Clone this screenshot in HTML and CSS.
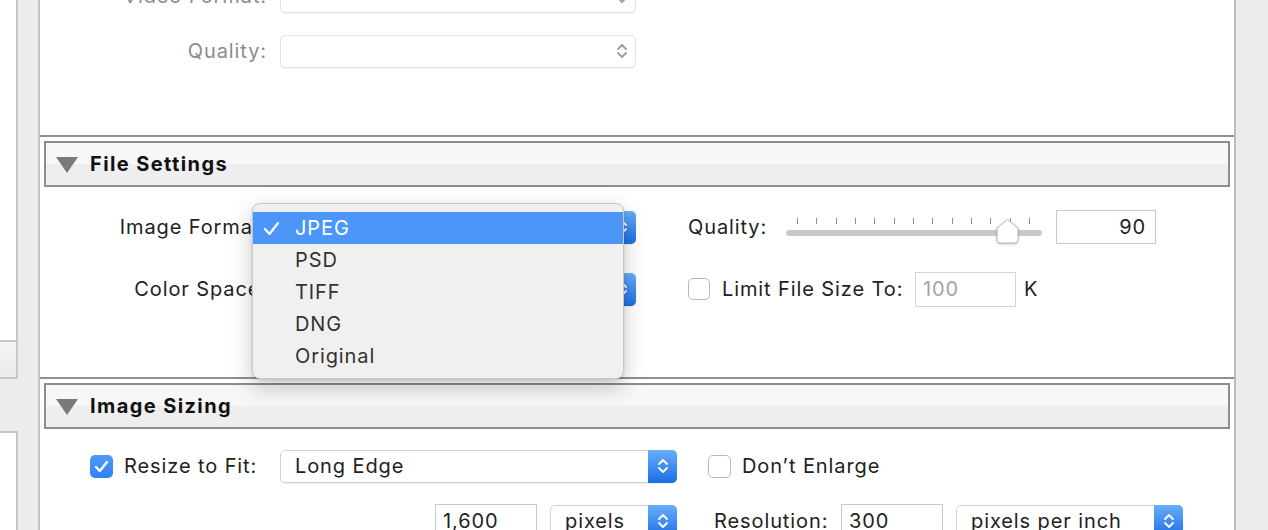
FILE: index.html
```html
<!DOCTYPE html>
<html lang="en">
<head>
<meta charset="utf-8">
<title>Export Settings</title>
<link rel="stylesheet" href="styles.css">
</head>
<body>
<div class="window">
  <aside class="sidebar">
    <div class="sb-col">
      <div class="sb-white sb-top"></div>
      <div class="sb-box"></div>
      <div class="sb-gap"></div>
      <div class="sb-white sb-bottom"></div>
    </div>
  </aside>

  <main class="panel">
    <section class="sec-top">
      <div class="row">
        <span class="lbl disabled-text">Video Format:</span>
        <div class="popup disabled">
          <span class="val"></span>
          <span class="step grey"><svg width="12" height="20" viewBox="0 0 12 20"><path d="M2 8 L6 4 L10 8 M2 12 L6 16 L10 12" fill="none" stroke="#9c9c9c" stroke-width="1.8" stroke-linecap="round" stroke-linejoin="round"/></svg></span>
        </div>
      </div>
      <div class="row">
        <span class="lbl disabled-text">Quality:</span>
        <div class="popup disabled">
          <span class="val"></span>
          <span class="step grey"><svg width="12" height="20" viewBox="0 0 12 20"><path d="M2 8 L6 4 L10 8 M2 12 L6 16 L10 12" fill="none" stroke="#9c9c9c" stroke-width="1.8" stroke-linecap="round" stroke-linejoin="round"/></svg></span>
        </div>
      </div>
    </section>

    <div class="sep"></div>

    <section class="sec">
      <header class="sec-head">
        <svg class="tri" width="22" height="16" viewBox="0 0 22 16"><polygon points="0,0 22,0 11,16" fill="#7a7a7a"/></svg>
        <h2>File Settings</h2>
      </header>
      <div class="sec-body file-body">
        <div class="row">
          <span class="lbl">Image Format:</span>
          <div class="popup">
            <span class="val"></span>
            <span class="step blue"><svg width="12" height="20" viewBox="0 0 12 20"><path d="M2 8 L6 4 L10 8 M2 12 L6 16 L10 12" fill="none" stroke="#fff" stroke-width="1.8" stroke-linecap="round" stroke-linejoin="round"/></svg></span>
          </div>
          <span class="q-lbl">Quality:</span>
          <div class="slider">
            <div class="ticks">
              <i></i><i></i><i></i><i></i><i></i><i></i><i></i><i></i><i></i><i></i><i></i><i></i><i></i>
            </div>
            <div class="track"></div>
            <svg class="thumb" width="25" height="27" viewBox="0 0 25 27"><path d="M2 10 L12.5 1.5 L23 10 V22 Q23 25 20 25 H5 Q2 25 2 22 Z" fill="#fff" stroke="#b4b4b4" stroke-width="1"/></svg>
          </div>
          <div class="field q-field">90</div>
        </div>
        <div class="row">
          <span class="lbl">Color Space:</span>
          <div class="popup">
            <span class="val"></span>
            <span class="step blue"><svg width="12" height="20" viewBox="0 0 12 20"><path d="M2 8 L6 4 L10 8 M2 12 L6 16 L10 12" fill="none" stroke="#fff" stroke-width="1.8" stroke-linecap="round" stroke-linejoin="round"/></svg></span>
          </div>
          <span class="check limit-check"></span>
          <span class="limit-lbl">Limit File Size To:</span>
          <div class="field limit-field placeholder">100</div>
          <span class="unit">K</span>
        </div>

        <div class="menu">
          <div class="menu-item selected">
            <svg class="tick" width="17" height="15" viewBox="0 0 17 15"><path d="M2 8 L6.5 13 L15 2" fill="none" stroke="#fff" stroke-width="2.2" stroke-linecap="round" stroke-linejoin="round"/></svg>
            <span>JPEG</span>
          </div>
          <div class="menu-item"><span>PSD</span></div>
          <div class="menu-item"><span>TIFF</span></div>
          <div class="menu-item"><span>DNG</span></div>
          <div class="menu-item"><span>Original</span></div>
        </div>
      </div>
    </section>

    <div class="sep"></div>

    <section class="sec">
      <header class="sec-head">
        <svg class="tri" width="22" height="16" viewBox="0 0 22 16"><polygon points="0,0 22,0 11,16" fill="#7a7a7a"/></svg>
        <h2>Image Sizing</h2>
      </header>
      <div class="sec-body size-body">
        <div class="row">
          <div class="lbl-check">
            <span class="check checked"><svg width="15" height="13" viewBox="0 0 15 13"><path d="M2 7 L5.8 11 L13 2" fill="none" stroke="#fff" stroke-width="2.4" stroke-linecap="round" stroke-linejoin="round"/></svg></span>
            <span>Resize to Fit:</span>
          </div>
          <div class="popup wide">
            <span class="val">Long Edge</span>
            <span class="step blue"><svg width="12" height="20" viewBox="0 0 12 20"><path d="M2 8 L6 4 L10 8 M2 12 L6 16 L10 12" fill="none" stroke="#fff" stroke-width="1.8" stroke-linecap="round" stroke-linejoin="round"/></svg></span>
          </div>
          <span class="check enlarge-check"></span>
          <span class="enlarge-lbl">Don’t Enlarge</span>
        </div>
        <div class="row dims">
          <div class="field px-field">1,600</div>
          <div class="popup unit-pop">
            <span class="val">pixels</span>
            <span class="step blue"><svg width="12" height="20" viewBox="0 0 12 20"><path d="M2 8 L6 4 L10 8 M2 12 L6 16 L10 12" fill="none" stroke="#fff" stroke-width="1.8" stroke-linecap="round" stroke-linejoin="round"/></svg></span>
          </div>
          <span class="res-lbl">Resolution:</span>
          <div class="field res-field">300</div>
          <div class="popup ppi-pop">
            <span class="val">pixels per inch</span>
            <span class="step blue"><svg width="12" height="20" viewBox="0 0 12 20"><path d="M2 8 L6 4 L10 8 M2 12 L6 16 L10 12" fill="none" stroke="#fff" stroke-width="1.8" stroke-linecap="round" stroke-linejoin="round"/></svg></span>
          </div>
        </div>
      </div>
    </section>
  </main>

  <aside class="gutter-right"></aside>
</div>
</body>
</html>
```

FILE: styles.css
```css
* { box-sizing: border-box; }

html, body {
  margin: 0;
  padding: 0;
}

body {
  width: 1268px;
  height: 530px;
  overflow: hidden;
  background: #ececec;
  font-family: Inter, "Noto Sans", "Liberation Sans", sans-serif;
  font-size: 20px;
  letter-spacing: 0.9px;
  color: #222;
}

.window {
  display: flex;
  height: 530px;
}

/* left sidebar */
.sidebar {
  flex: none;
  width: 40px;
  height: 100%;
  background: #ececec;
  border-right: 2px solid #c4c4c4;
}

.sb-col {
  width: 18px;
  height: 100%;
  display: flex;
  flex-direction: column;
}

.sb-white {
  background: #fff;
  border-right: 2px solid #c6c6c6;
}

.sb-top { height: 340px; }

.sb-box {
  height: 39px;
  background: linear-gradient(#f4f4f4, #ebebeb);
  border: 2px solid #c8c8c8;
  border-left: none;
}

.sb-gap { height: 52px; }

.sb-bottom {
  flex: 1;
  border-top: 2px solid #c6c6c6;
}

/* main panel */
.panel {
  flex: none;
  width: 1196px;
  height: 100%;
  background: #fff;
  border-right: 2px solid #bdbdbd;
  overflow: hidden;
}

.gutter-right {
  flex: 1;
  background: #ececec;
}

.sep {
  height: 2px;
  background: #8f8f8f;
}

.row {
  display: flex;
  align-items: center;
  height: 34px;
}

.lbl {
  flex: none;
  width: 240px;
  padding-right: 13px;
  text-align: right;
  white-space: nowrap;
}

.disabled-text { color: #8b8b8b; }

.sec-top {
  margin-top: -21px;
  padding-bottom: 67px;
  display: flex;
  flex-direction: column;
  gap: 21px;
}

.sec-head {
  margin: 4px 4px 0;
  height: 46px;
  border: 2px solid #8d8d8d;
  background: linear-gradient(#f7f7f7 50%, #eeeeee 50%);
  display: flex;
  align-items: center;
  padding-left: 10px;
  gap: 12px;
}

.sec-head .tri { flex: none; margin-top: 2px; }

.sec-head h2 {
  margin: 0;
  font-size: 20px;
  font-weight: 700;
  letter-spacing: 1.4px;
  color: #111;
}

.sec-body {
  display: flex;
  flex-direction: column;
}

.file-body {
  position: relative;
  padding: 23px 0 71px;
  gap: 28px;
}

.size-body {
  padding-top: 20px;
  gap: 21px;
}

/* popup buttons */
.popup {
  flex: none;
  width: 356px;
  height: 33px;
  display: flex;
  align-items: stretch;
  background: #fff;
  border: 1px solid #d2d2d2;
  border-radius: 5px;
  box-shadow: 0 1px 1px rgba(0, 0, 0, 0.07);
}

.popup.disabled {
  border-color: #e3e3e3;
  box-shadow: 0 1px 1px rgba(0, 0, 0, 0.05);
}

.popup .val {
  flex: 1;
  display: flex;
  align-items: center;
  padding-left: 14px;
  white-space: nowrap;
}

.popup .step {
  flex: none;
  width: 29px;
  margin: -1px -1px -1px 0;
  border-radius: 0 5px 5px 0;
  display: flex;
  align-items: center;
  justify-content: center;
}

.step.blue {
  background: linear-gradient(#69aefa, #1b6de6);
}

.popup.wide { width: 397px; }

/* quality */
.q-lbl {
  flex: none;
  width: 98px;
  margin-left: 52px;
}

.slider {
  flex: none;
  position: relative;
  width: 256px;
  height: 34px;
}

.ticks {
  display: flex;
  justify-content: space-between;
  padding: 8px 12px 0 11px;
}

.ticks i {
  display: block;
  width: 1px;
  height: 6px;
  background: #8c8c8c;
}

.track {
  margin-top: 6px;
  height: 6px;
  border-radius: 3px;
  background: #c9c9c9;
}

.thumb {
  position: absolute;
  left: 209px;
  top: 8px;
  filter: drop-shadow(0 1px 1px rgba(0, 0, 0, 0.18));
}

.field {
  flex: none;
  height: 34px;
  border: 1px solid #c9c9c9;
  background: #fff;
  display: flex;
  align-items: center;
  padding: 0 7px;
}

.q-field {
  width: 100px;
  margin-left: 14px;
  justify-content: flex-end;
  padding-right: 9px;
}

.check {
  flex: none;
  width: 22px;
  height: 22px;
  border: 1px solid #b9b9b9;
  border-radius: 5px;
  background: #fff;
  display: flex;
  align-items: center;
  justify-content: center;
}

.check.checked {
  width: 23px;
  height: 23px;
  border: none;
  background: linear-gradient(#4b9bf9, #2f83f3);
}

.limit-check { margin-left: 52px; }

.limit-lbl {
  flex: none;
  width: 205px;
  padding-left: 12px;
  white-space: nowrap;
}

.limit-field {
  width: 101px;
  height: 35px;
  border-color: #d4d4d4;
}

.placeholder { color: #a3a3a3; }

.unit { margin-left: 8px; }

/* dropdown menu */
.menu {
  position: absolute;
  left: 212px;
  top: 16px;
  width: 372px;
  height: 176px;
  padding: 8px 0;
  background: #f0f0f0;
  border: 1px solid #c9c9c9;
  border-radius: 8px;
  box-shadow: 0 8px 22px rgba(0, 0, 0, 0.22), 0 1px 3px rgba(0, 0, 0, 0.12);
  color: #333;
}

.menu-item {
  position: relative;
  height: 32px;
  display: flex;
  align-items: center;
  padding-left: 42px;
}

.menu-item.selected {
  background: #4d96f9;
  color: #fff;
}

.menu-item .tick {
  position: absolute;
  left: 10px;
  top: 9px;
}

/* image sizing */
.lbl-check {
  flex: none;
  width: 240px;
  padding-left: 50px;
  display: flex;
  align-items: center;
  gap: 11px;
  white-space: nowrap;
}

.enlarge-check {
  width: 23px;
  height: 23px;
  margin-left: 31px;
}

.enlarge-lbl { margin-left: 11px; }

.dims { padding-left: 395px; }

.px-field { width: 102px; }

.unit-pop {
  width: 127px;
  margin-left: 13px;
}

.res-lbl {
  flex: none;
  width: 127px;
  margin-left: 37px;
}

.res-field { width: 102px; }

.ppi-pop {
  width: 227px;
  margin-left: 13px;
}
```
